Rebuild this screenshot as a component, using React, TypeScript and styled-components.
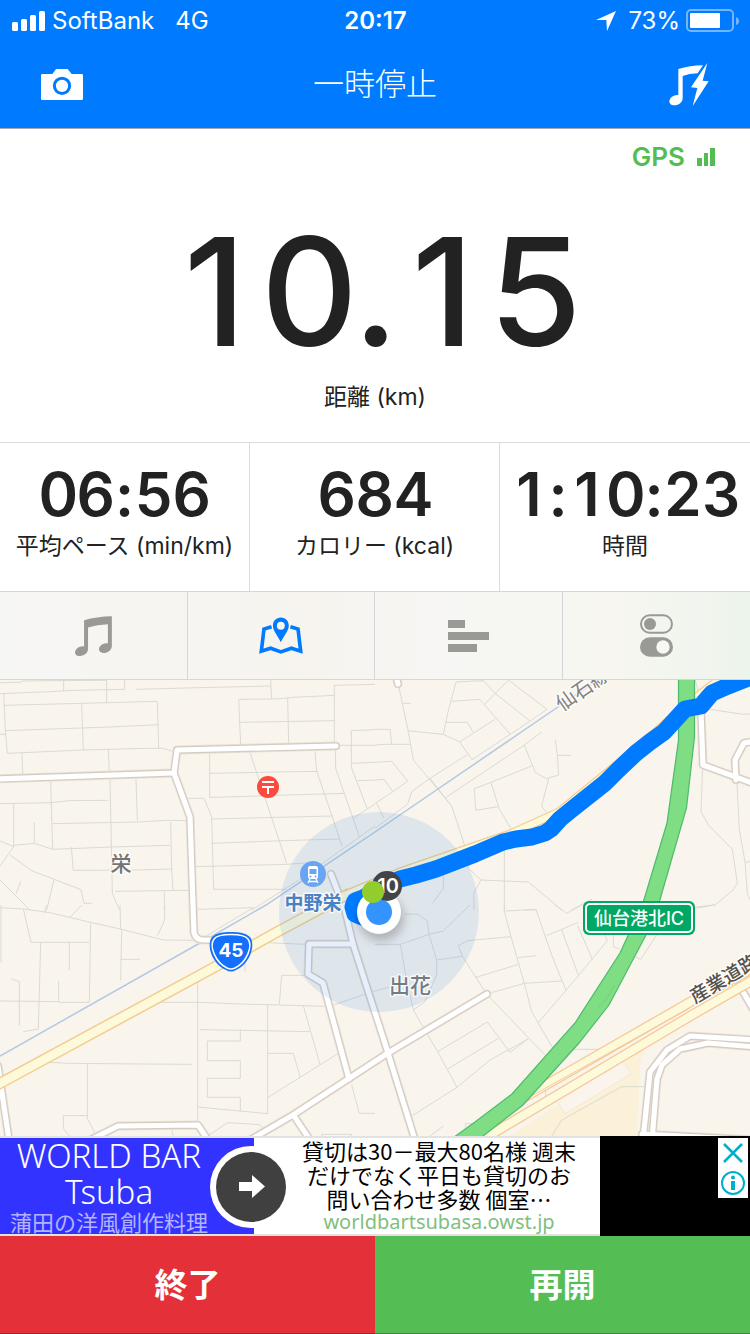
import React from "react";
import styled, { createGlobalStyle } from "styled-components";

const sans = `Inter, "Noto Sans CJK JP", sans-serif`;
const adSans = `"Noto Sans CJK JP", "Noto Sans", sans-serif`;

const GlobalStyle = createGlobalStyle`
  * { box-sizing: border-box; }
  body { margin: 0; background: #fff; color: #222; font-family: ${sans}; }
  button { border: 0; padding: 0; margin: 0; background: none; font: inherit; color: inherit; cursor: pointer; }
  svg { display: block; }
`;

const Screen = styled.div`
  display: flex;
  flex-direction: column;
  min-height: 100vh;
`;

const Header = styled.header`
  background: #007aff;
  color: #fff;
  border-bottom: 1px solid #a3a8ae;
`;

const StatusBar = styled.div`
  display: grid;
  grid-template-columns: 1fr auto 1fr;
  align-items: center;
  height: 40px;
  padding: 2px 11px 0 12px;
  font-size: 24px;
  line-height: 38px;
`;

const StatusGroup = styled.div<{ $end?: boolean }>`
  display: flex;
  align-items: center;
  justify-content: ${(p) => (p.$end ? "flex-end" : "flex-start")};
  gap: ${(p) => (p.$end ? 6 : 7)}px;
`;

const Network = styled.span`
  margin-left: 14px;
`;

const Percent = styled.span`
  margin-left: 6px;
`;

const Clock = styled.time`
  font-weight: 600;
`;

const NavBar = styled.div`
  display: grid;
  grid-template-columns: 1fr auto 1fr;
  align-items: center;
  height: 88px;
  padding: 0 41px;
`;

const Title = styled.h1`
  margin: 0;
  font-size: 31px;
  line-height: 40px;
  font-weight: 300;
`;

const NavButton = styled.button<{ $end?: boolean }>`
  justify-self: ${(p) => (p.$end ? "end" : "start")};
`;

const Distance = styled.section`
  display: flex;
  flex-direction: column;
  align-items: center;
  height: 313px;
  padding-top: 12px;
`;

const Gps = styled.div`
  align-self: flex-end;
  display: flex;
  align-items: center;
  gap: 12px;
  padding-right: 35px;
  color: #53bd53;
  font-size: 26px;
  line-height: 32px;
  font-weight: 600;
`;

const DistanceValue = styled.div`
  margin-top: 30px;
  font-size: 150px;
  line-height: 178px;
  font-weight: 500;
`;

/* Each figure sits in a cell of its own, so that a running value does not shift sideways. */
const Cell = styled.span<{ $width: number }>`
  display: inline-block;
  width: ${(p) => p.$width}px;
  text-align: center;
`;

const Label = styled.div`
  font-size: 23px;
  line-height: 32px;
  white-space: nowrap;
`;

const Stats = styled.section`
  display: grid;
  grid-template-columns: repeat(3, 1fr);
  border-top: 1px solid #dcdcdc;
`;

const Stat = styled.div`
  display: flex;
  flex-direction: column;
  align-items: center;
  height: 148px;
  padding-top: 15px;
  &:not(:last-child) { border-right: 1px solid #dcdcdc; }
`;

const StatValue = styled.div`
  font-size: 60px;
  line-height: 72px;
  font-weight: 600;
  white-space: nowrap;
`;

const Tabs = styled.nav`
  display: grid;
  grid-template-columns: repeat(4, 1fr);
  border: solid #d6d6d6;
  border-width: 1px 0;
  background: linear-gradient(90deg, #f6f6f4, #f7f4ef 42%, #f6f6f4 60%, #f7f6f1 82%, #edf4ec);
`;

const Tab = styled.button<{ $active?: boolean }>`
  display: flex;
  align-items: center;
  justify-content: center;
  height: 87px;
  color: ${(p) => (p.$active ? "#007aff" : "#999995")};
  &:not(:last-child) { border-right: 1px solid #d6d6d8; }
`;

const MapFrame = styled.main`
  height: 456px;
  background: #f9f4ec;
  & > svg { width: 100%; height: 100%; }
`;

const Ad = styled.aside`
  display: grid;
  grid-template-columns: 254fr 346fr 150fr;
  height: 100px;
  font-family: ${adSans};
`;

const AdBrand = styled.a`
  display: flex;
  flex-direction: column;
  align-items: center;
  padding-right: 36px;
  border: solid #e2e2e2;
  border-width: 2px 0;
  background: #3333ff;
  color: #fff;
  text-align: center;
  text-decoration: none;
  white-space: nowrap;
`;

const AdName = styled.span`
  font-family: "Noto Sans", sans-serif;
  font-size: 33px;
  line-height: 36px;
  font-weight: 300;
`;

const AdTag = styled.span`
  color: #b3b3ff;
  font-size: 22px;
  line-height: 22px;
  font-weight: 400;
`;

const AdBody = styled.a`
  position: relative;
  padding-left: 24px;
  border: solid #e2e2e2;
  border-width: 2px 0;
  background: #fff;
  color: #000;
  font-size: 22px;
  line-height: 24px;
  text-align: center;
  text-decoration: none;
  white-space: nowrap;
`;

const AdUrl = styled.span`
  display: block;
  color: #7fc080;
  font-family: "Noto Sans", sans-serif;
  font-size: 20px;
  line-height: 24px;
`;

const AdArrow = styled.span`
  position: absolute;
  left: -44px;
  top: 8px;
`;

const AdSide = styled.div`
  display: flex;
  justify-content: flex-end;
  align-items: flex-start;
  padding: 2px;
  background: #000;
`;

const AdControls = styled.div`
  display: flex;
  flex-direction: column;
  background: #fff;
  color: #00aecd;
`;

const Actions = styled.footer`
  display: grid;
  grid-template-columns: 1fr 1fr;
  flex: 1;
`;

const Action = styled.button<{ $color: string; $edge: string }>`
  min-height: 98px;
  background: ${(p) => p.$color};
  border-bottom: 1px solid ${(p) => p.$edge};
  color: #fff;
  font-size: 33px;
  line-height: 40px;
  font-weight: 700;
`;

const SignalIcon = () => (
  <svg width="33" height="20" viewBox="0 0 33 20" fill="#fff">
    <rect y="11" width="6" height="9" rx="1.5" />
    <rect x="9" y="8" width="6" height="12" rx="1.5" />
    <rect x="18" y="4" width="6" height="16" rx="1.5" />
    <rect x="27" y="0" width="6" height="20" rx="1.5" />
  </svg>
);

const LocationIcon = () => (
  <svg width="20" height="20" viewBox="0 0 60 60" fill="#fff">
    <path d="M60 0 33 60 31 27 0 27Z" />
  </svg>
);

const BatteryIcon = () => (
  <svg width="53" height="24" viewBox="0 0 53 24">
    <rect x="1" y="1" width="46" height="21" rx="4" fill="none" stroke="#fff" strokeOpacity=".45" strokeWidth="2" />
    <rect x="4" y="4" width="30" height="15" rx="1" fill="#fff" />
    <path d="M50 8q3 1 3 4t-3 4Z" fill="#fff" fillOpacity=".45" />
  </svg>
);

const CameraIcon = () => (
  <svg width="42" height="31" viewBox="0 0 126 93">
    <path
      fill="#fff"
      fillRule="evenodd"
      d="M4 15H34Q42 5 45 0H80Q84 5 92 15H122Q126 15 126 19V89Q126 93 122 93H4Q0 93 0 89V19Q0 15 4 15ZM63 23A27 27 0 1 0 63 78A27 27 0 1 0 63 23ZM63 32A18.500 18.500 0 1 1 63 69A18.500 18.500 0 1 1 63 32Z"
    />
  </svg>
);

const MusicBoltIcon = () => (
  <svg width="40" height="43" viewBox="0 0 120 129" fill="#fff">
    <path d="M28 18Q62 8 102 7L86 31Q60 32 41 39V106C41 119 28 128 14 127C-2 125-2 111 8 102C14 97 22 95 28 96Z" />
    <path d="M115 0 66 73 85 75 71 129 119 55 101 53Z" />
  </svg>
);

const GpsBars = () => (
  <svg width="18" height="18" viewBox="0 0 18 18" fill="currentColor">
    <rect y="10" width="5" height="8" />
    <rect x="7" y="5" width="4" height="13" />
    <rect x="13" width="5" height="18" />
  </svg>
);

const MusicIcon = () => (
  <svg width="37" height="40" viewBox="42 47 111 121" fill="currentColor">
    <path d="M69 60Q108 49 153 48V136C153 150 141 159 127 159C114 158 110 147 118 138C124 131 133 128 141 130V72Q108 73 81 82V146C81 161 67 168 54 168C41 167 38 156 46 147C52 140 62 137 69 139Z" />
  </svg>
);

const MapIcon = () => (
  <svg width="44" height="37" viewBox="598 49 133 111">
    <path
      fill="none"
      stroke="currentColor"
      strokeWidth="11"
      d="M636 78 613 85 605 152 633 143 664 154 696 143 724 152 716 85 693 78"
    />
    <path
      fill="currentColor"
      fillRule="evenodd"
      d="M664 50C649 50 640 61 640 75C640 90 654 104 664 125C674 104 688 90 688 75C688 61 679 50 664 50ZM664 63A12 12 0 1 1 664 87A12 12 0 1 1 664 63Z"
    />
  </svg>
);

const BarsIcon = () => (
  <svg width="41" height="32" viewBox="0 0 41 32" fill="currentColor">
    <rect width="17" height="8" />
    <rect y="12" width="41" height="8" />
    <rect y="24" width="29" height="8" />
  </svg>
);

const TogglesIcon = () => (
  <svg width="33" height="43" viewBox="0 0 99 129">
    <rect x="3" y="4" width="93" height="52" rx="26" fill="none" stroke="currentColor" strokeWidth="6" />
    <circle cx="30" cy="30" r="18" fill="currentColor" />
    <rect y="70" width="99" height="58" rx="29" fill="currentColor" />
    <circle cx="69" cy="99" r="20" fill="#f7f7f3" />
  </svg>
);

/* Minor streets, drawn on a grid three times as fine as the map, one string for each quarter. */
const streets = [
  {
    x: 0,
    y: 0,
    d: "M0 8 60 7 68 3 150 2 320 1M191 0V33M0 41 150 35 220 31 374 28V0M320 0V70M408 28 600 23 812 18M812 0 815 57M11 40 16 150 22 220 250 210 440 205 490 205 520 215M11 76 245 70 472 64 476 205M245 70 250 212M18 152 330 141 476 134M0 163H18M66 220 68 284M325 208 328 275M722 195 716 58 830 57 880 52 1003 46M863 54 866 190M720 127 1003 122M1003 187V16L1125 13M1125 149 1054 152V262L1102 387 1125 372M1018 196H1125M1054 250 1125 247M1073 302 1125 300M152 304 158 508M0 371 155 368 205 362 325 361M330 296 337 640 358 690M408 296 412 422M158 431 415 426 500 421 558 422M41 371V500M103 427V490M0 483 41 500 0 558M41 496 103 490 158 508 334 501 510 496M512 427 515 567M214 501 220 571 420 570 515 567 519 630M30 525 95 572 243 629 252 670H275M162 598 140 690M0 600 90 690M62 605 48 642M345 634 565 631M493 635V690M629 217V352M629 280 890 275 955 274M750 217 860 550M945 214 950 272 1027 500M1006 187 1007 265 1078 470M562 355H612M628 352 720 350 860 345 1035 340M612 355 635 410 641 628H860M635 417 830 412 1000 408M635 490 850 482 1020 477M585 560 860 553 930 548M1060 415 1102 387M755 690 900 598 1125 438",
  },
  {
    x: 1125,
    y: 0,
    d: "M72 22 98 145 115 240 230 378 270 500 280 565 318 600 460 606 560 690M318 600 296 640 297 690M205 560V625L172 670M85 70H107M0 148H45L50 192M0 195 30 193H107M98 152 205 163 254 186 291 239 464 124M205 163 218 100 243 6 325 2 360 40 464 122M230 64 314 58 328 74 405 162M328 74 400 0 516 88 464 124M213 127H277L294 156M254 186 360 118M0 247 50 244 98 303 54 335 27 298 0 300M0 370 54 335M5 370 27 415M0 445 98 372 110 335 165 295 277 224M165 295 230 378M210 354 448 195 500 156M448 195 481 278 514 296 551 285 547 226H587M547 226 541 180M521 296 500 378 514 398M298 326 348 307 470 258M298 326 302 391 370 380M348 307 372 385 410 450M388 510V690M983 260 978 395 1000 435 1072 508 1087 610 1074 630 1022 674 960 685M960 0 985 85 1105 103 1125 102M1086 310 1093 450 1110 545 1117 640 1125 660M1110 547 1125 545M450 690H482M590 690 650 658",
  },
  {
    x: 0,
    y: 675,
    d: "M0 8 70 12 145 22 275 53 365 73 490 105 580 106M3 0V172M70 12 93 112H267M139 0 134 25M245 0 209 38M360 0 362 72M365 73 362 226M362 163H420M494 0V45L472 92M590 13 760 8 615 95M272 55 268 292H177M122 112 115 372 70 380M208 112V195M34 222 58 230V362M176 228V290L0 288M593 220V650M473 292H593L720 297 840 300 975 304M838 298 845 211H920M735 200V170M780 112 915 118M803 298V626L593 606M600 374 720 376 930 380M721 372V408H622V467H721V520H622V577H721V617M910 302 960 478M803 445H880L900 515M803 578 1015 445M1000 300 1125 258M150 472 205 475 425 477 575 478M262 475V640L288 690M262 632H190V670L208 693M515 675 520 693M628 690 682 653 780 659 790 672M1055 540 1078 625H1125M965 693V688H1055V693",
  },
  {
    x: 1125,
    y: 675,
    d: "M0 118H76L162 88 205 78 285 0M90 27 130 28 157 48 162 88 185 165V210L150 290 115 315 148 372 188 440 246 547M76 118 92 210 115 315M185 165 262 154 333 264 350 283 510 450M278 107 408 95M278 107 250 122 262 154M0 258 42 246M388 0V18L408 95 430 172 448 235 470 320 535 432M392 18 483 13 530 150 573 256M430 158 482 152M300 218 430 178M350 263 448 235 560 228M490 353 573 256 697 107 690 90M515 92 610 52M560 75 610 210M608 62 652 163M188 440 337 351 405 442M218 492 370 400M112 632 246 547 345 465 459 402M405 442 459 402M165 693 205 663M271 668V656H300M715 90V125L733 132M780 155 797 163 845 90M595 433H680M540 0 575 25 620 0M942 8 1020 0M512 535V590M530 693 560 645 740 545H810",
  },
];

const whiteRoads = [
  "M-4 779 174 773 177 750 336 746",
  "M174 773 190 817 193 905 194 933Q196 940 203 940H220",
  "M331 874 345 910 353 944 388 1053 415 1140",
  "M353 944H309L308 974 323 983 349 1079",
  "M487 994 388 1053 293 1115 250 1140",
  "M294 1116 310 1140",
  "M90 1140 118 1126 198 1125 208 1140",
  "M-2 1066 9 1140",
  "M397 680 398 684",
  "M701 712 703 765 760 786",
  "M736 780 735 760 744 743 756 741",
  "M739 985 756 1014",
  "M756 1040 690 1036 667 1050 650 1072 643 1140",
  "M756 1047 708 1043 680 1049 662 1065 657 1079 652 1140",
  "M642 1134 756 1140",
];

const RouteMap = () => (
  <svg viewBox="0 680 750 456" preserveAspectRatio="xMidYMid slice" role="img" aria-label="ルートマップ">
    <rect x="-400" y="680" width="1600" height="456" fill="#f9f4ec" />
    <path d="M645 1048 640 1065 637 1136H510Z" fill="#faf1d8" />
    <path d="M622 1060 631 1074 565 1114 557 1101Z" fill="#faf4ec" stroke="#f8e8d4" />
    <g fill="none" stroke="#d9dbd4" strokeWidth="3">
      {streets.map((s) => (
        <path key={`${s.x}-${s.y}`} transform={`translate(${s.x / 3} ${680 + s.y / 3}) scale(.33333)`} d={s.d} />
      ))}
    </g>
    <path d="M0 1056 200 943 266 905 375 832 555 709 760 570" fill="none" stroke="#b3c8e4" strokeWidth="1.500" />

    <g fill="none" strokeLinecap="round" strokeLinejoin="round">
      {whiteRoads.map((d) => (
        <path key={d} d={d} stroke="#e9e1d8" strokeWidth="9" />
      ))}
      {whiteRoads.map((d) => (
        <path key={d} d={d} stroke="#d6cbc1" strokeWidth="7.500" />
      ))}
      {whiteRoads.map((d) => (
        <path key={d} d={d} stroke="#fff" strokeWidth="5.200" />
      ))}
    </g>

    <g fill="none">
      <path d="M-5 1086 213 968 277 932 350 893" stroke="#f4cc90" strokeWidth="11.500" />
      <path d="M-5 1086 213 968 277 932 350 893" stroke="#fcfadb" strokeWidth="8.500" />
      <path d="M345 895 400 872 510 834 559 812 640 746 690 702 716 682" stroke="#f4cc90" strokeWidth="9" />
      <path d="M345 895 400 872 510 834 559 812 640 746 690 702 716 682" stroke="#fcfadb" strokeWidth="6.500" />
      <path d="M518 1101 692 1001 760 964M470 1147 692 1015 760 976" stroke="#f7c795" strokeWidth="10.500" />
      <path d="M518 1101 692 1001 760 964M470 1147 692 1015 760 976" stroke="#fcfadb" strokeWidth="8" />
      <path d="M526 1099 690 1008" stroke="#f7c795" strokeWidth="1" />
    </g>

    <path
      d="M678.500 675V740L667 823 643 903 620 953 575 1023 512 1094 475 1122 450 1140H478L523 1105 579 1043 609 1005 646 935 659 903 686.500 808 694.500 737V675Z"
      fill="#7fdd84"
      stroke="#4dbb6e"
      strokeWidth="1.200"
    />
    <path d="M615 985Q607 1000 597 1009" fill="none" stroke="#72d17a" />

    <circle cx="379" cy="912" r="100" fill="#1478e6" fillOpacity=".11" />

    <path
      d="M362 917 355 914 353 907 355 901 363 898 380 888 400 879 416 875 436 869 475 854 503 842 516 839 532 837 545 833 551 829 560 819 571 810 605 783 618 770 636 753 650 742 664 732 675 720 685 709 701 706 706 700 712 693 728 686 756 675"
      fill="none"
      stroke="#007aff"
      strokeWidth="17"
      strokeLinejoin="round"
      strokeLinecap="round"
    />

    <g fontFamily='Inter, "Noto Sans CJK JP", sans-serif' textAnchor="middle" fontWeight="700">
      <g stroke="#fff" strokeOpacity=".8" strokeWidth="3" paintOrder="stroke" strokeLinejoin="round">
        <text x="121" y="871" fontSize="21" fontWeight="500" fill="#77746e">栄</text>
        <text x="410" y="993" fontSize="21" fontWeight="500" fill="#737b83">出花</text>
        <text x="313" y="910" fontSize="19" fill="#4a80c4">中野栄</text>
        <text transform="translate(562 712) rotate(-35)" fontSize="20" fontWeight="400" textAnchor="start" fill="#85827c">仙石線</text>
        <text transform="translate(695 1004) rotate(-31)" fontSize="19" fontWeight="500" textAnchor="start" fill="#55534f">産業道路</text>
      </g>

      <circle cx="268" cy="787" r="11" fill="#fb4a3f" />
      <path d="M262 782H274M262 787H274M268 787V794" stroke="#fff" strokeWidth="2" />

      <circle cx="313" cy="874" r="13" fill="#69a5f2" />
      <rect x="308" y="866" width="10" height="13" rx="2" fill="#fff" />
      <path d="M309.500 869H316.500V874H309.500Z" fill="#69a5f2" />
      <circle cx="310.500" cy="876.500" r="1" fill="#69a5f2" />
      <circle cx="315.500" cy="876.500" r="1" fill="#69a5f2" />
      <path d="M310 879 308 883M316 879 318 883M309 881.500H317" stroke="#fff" strokeWidth="1.300" />

      <path d="M231 932C239 932 246 933 250 937C256 945 250 964 236 970Q231 973 226 970C212 964 206 945 212 937C216 933 223 932 231 932Z" fill="#146ffa" />
      <path d="M231 934.500C239 934.500 245 935 248 939C253 946 247 962 235 968Q231 970 227 968C215 962 209 946 214 939C217 935 223 934.500 231 934.500Z" fill="none" stroke="#fff" strokeWidth="1.500" />
      <text x="231" y="957" fontSize="19" fill="#fff">45</text>

      <rect x="583" y="901" width="112" height="34" rx="6" fill="#00a863" />
      <rect x="586" y="904" width="106" height="28" rx="4" fill="none" stroke="#fff" strokeWidth="2" />
      <text x="639" y="925" fontSize="18" fontWeight="500" fill="#fff">仙台港北IC</text>

      <circle cx="381" cy="918" r="23" fill="#000" fillOpacity=".22" filter="url(#markerShadow)" />
      <circle cx="379" cy="912" r="22" fill="#fff" />
      <circle cx="379" cy="912" r="13" fill="#3394ff" />
      <circle cx="387" cy="886" r="15" fill="#414548" />
      <text x="388" y="893" fontSize="20" fontWeight="600" fill="#fff">10</text>
      <circle cx="373" cy="892" r="11" fill="#93cc2d" />
    </g>
    <defs>
      <filter id="markerShadow" x="-50%" y="-50%" width="200%" height="200%">
        <feGaussianBlur stdDeviation="5" />
      </filter>
    </defs>
  </svg>
);

const ArrowBadge = () => (
  <svg width="82" height="82" viewBox="0 0 82 82">
    <circle cx="41" cy="41" r="41" fill="#fff" />
    <circle cx="41" cy="41" r="35" fill="#404040" />
    <path d="M29 36H42V29L55 40.500 42 52V45H29Z" fill="#fff" />
  </svg>
);

const CloseIcon = () => (
  <svg width="30" height="30" viewBox="0 0 30 30" fill="none" stroke="currentColor" strokeWidth="2.500">
    <path d="M6 6 24 24M24 6 6 24" />
  </svg>
);

const InfoIcon = () => (
  <svg width="30" height="30" viewBox="0 0 30 30">
    <circle cx="15" cy="15" r="11" fill="none" stroke="currentColor" strokeWidth="2" />
    <circle cx="15" cy="9.500" r="2" fill="currentColor" />
    <path d="M13 13H17V22H13Z" fill="currentColor" />
  </svg>
);

const Figures = ({ value, digit, mark }: { value: string; digit: number; mark: number }) => (
  <>
    {value.split("").map((c, i) => (
      <Cell key={i} $width={/\d/.test(c) ? digit : mark}>
        {c}
      </Cell>
    ))}
  </>
);

const stats = [
  { value: "06:56", label: "平均ペース (min/km)" },
  { value: "684", label: "カロリー (kcal)" },
  { value: "1:10:23", label: "時間" },
];

const tabs = [
  { name: "音楽", icon: <MusicIcon /> },
  { name: "マップ", icon: <MapIcon />, active: true },
  { name: "ラップ", icon: <BarsIcon /> },
  { name: "設定", icon: <TogglesIcon /> },
];

export default function App() {
  return (
    <Screen>
      <GlobalStyle />
      <Header>
        <StatusBar>
          <StatusGroup>
            <SignalIcon />
            <span>SoftBank</span>
            <Network>4G</Network>
          </StatusGroup>
          <Clock>20:17</Clock>
          <StatusGroup $end>
            <LocationIcon />
            <Percent>73%</Percent>
            <BatteryIcon />
          </StatusGroup>
        </StatusBar>
        <NavBar>
          <NavButton aria-label="カメラ">
            <CameraIcon />
          </NavButton>
          <Title>一時停止</Title>
          <NavButton $end aria-label="パワーソング">
            <MusicBoltIcon />
          </NavButton>
        </NavBar>
      </Header>

      <Distance>
        <Gps>
          GPS
          <GpsBars />
        </Gps>
        <DistanceValue>
          <Figures value="10.15" digit={92} mark={44} />
        </DistanceValue>
        <Label>距離 (km)</Label>
      </Distance>

      <Stats>
        {stats.map((s) => (
          <Stat key={s.label}>
            <StatValue>
              <Figures value={s.value} digit={38} mark={20} />
            </StatValue>
            <Label>{s.label}</Label>
          </Stat>
        ))}
      </Stats>

      <Tabs>
        {tabs.map((t) => (
          <Tab key={t.name} $active={t.active} aria-label={t.name}>
            {t.icon}
          </Tab>
        ))}
      </Tabs>

      <MapFrame>
        <RouteMap />
      </MapFrame>

      <Ad>
        <AdBrand href="#ad">
          <AdName>WORLD BAR</AdName>
          <AdName>Tsuba</AdName>
          <AdTag>蒲田の洋風創作料理</AdTag>
        </AdBrand>
        <AdBody href="#ad">
          <AdArrow>
            <ArrowBadge />
          </AdArrow>
          貸切は30－最大80名様 週末
          <br />
          だけでなく平日も貸切のお
          <br />
          問い合わせ多数 個室…
          <AdUrl>worldbartsubasa.owst.jp</AdUrl>
        </AdBody>
        <AdSide>
          <AdControls>
            <button aria-label="閉じる">
              <CloseIcon />
            </button>
            <button aria-label="広告情報">
              <InfoIcon />
            </button>
          </AdControls>
        </AdSide>
      </Ad>

      <Actions>
        <Action $color="#e43038" $edge="#a8242a">
          終了
        </Action>
        <Action $color="#54bd54" $edge="#3d8a3d">
          再開
        </Action>
      </Actions>
    </Screen>
  );
}
